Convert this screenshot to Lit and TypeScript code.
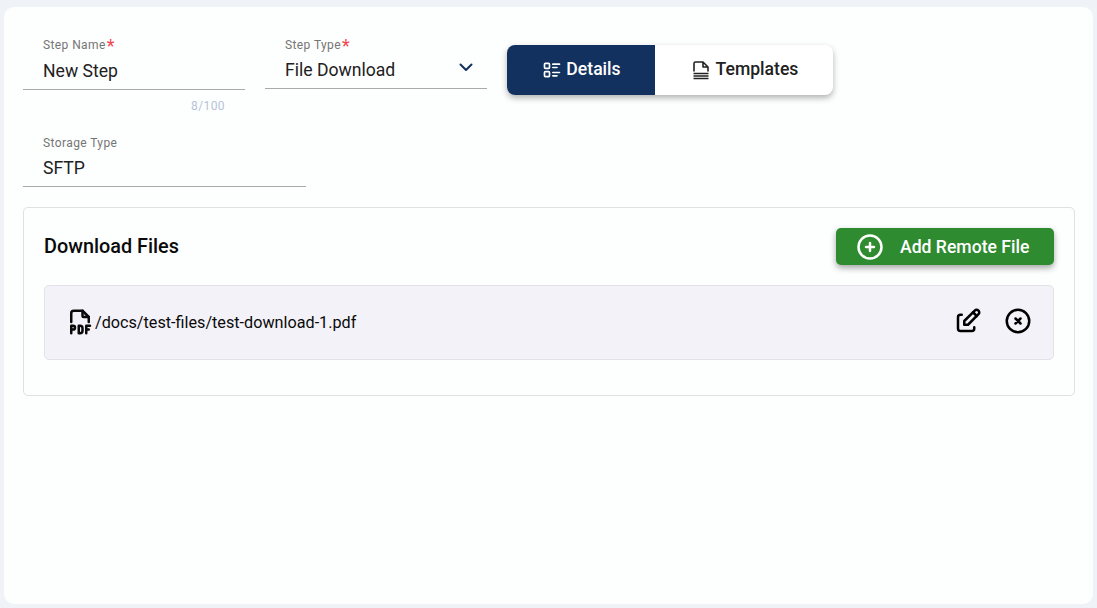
import { LitElement, html, css } from "lit";
import { customElement } from "lit/decorators.js";

@customElement("app-root")
export class AppRoot extends LitElement {
  static styles = css`
    :host { display: block; width: 1097px; height: 608px; background: #eff3f8; font-family: Roboto, "Liberation Sans", sans-serif; padding: 7px 4px 4px; box-sizing: border-box; overflow: hidden; }
    .card { height: 597px; background: #fdfefe; border-radius: 10px; padding: 0 18px 0 19px; box-sizing: border-box; display: flow-root; }
    .top { display: flex; gap: 20px; margin-top: 31px; height: 76px; align-items: flex-start; }
    .field { width: 222px; position: relative; }
    .label { font-size: 12px; line-height: 14px; color: #757575; padding-left: 20px; letter-spacing: .4px; display: flex; height: 14px; }
    .req { color: #f4454f; font-size: 18px; line-height: 16px; margin-left: 1px; letter-spacing: 0; }
    .value { font-size: 17.6px; line-height: 24px; color: #212121; padding-left: 20px; border-bottom: 1px solid #a9a9a9; }
    .v1 { padding-top: 7px; height: 30px; }
    .v2 { height: 30px; padding-top: 6px; display: flex; justify-content: space-between; }
    .chev { margin: -3px 9px 0 0; color: #12305f; }
    .count { font-size: 12px; line-height: 14px; color: #b7c3d6; text-align: right; padding: 9px 20px 0 0; letter-spacing: .4px; }
    .toggle { display: flex; width: 326px; height: 50px; margin-top: 7px; border-radius: 8px; overflow: hidden; box-shadow: 0 3px 6px rgba(0,0,0,.3); background: #fff; }
    .tab { display: flex; align-items: center; justify-content: center; gap: 6px; font-size: 17.6px; font-weight: 500; color: #212121; flex: 0 0 178px; padding: 0 0 3px 2px; box-sizing: border-box; }
    .tab.on { flex: 0 0 148px; background: #13315f; color: #fff; gap: 4px; padding-left: 1px; }
    .tab svg { flex: none; margin-top: 3px; }
    .storage { margin-top: 22px; width: 283px; }
    .storage .value { height: 30px; padding-top: 6px; }
    .panel { margin-top: 20px; height: 189px; border: 1px solid #dfe0e3; border-radius: 5px; box-sizing: border-box; padding: 20px 20px 0; }
    .head { display: flex; justify-content: space-between; align-items: center; height: 37px; }
    h2 { margin: 0; font-size: 19.84px; font-weight: 500; color: #0a0a0a; }
    button { width: 218px; height: 37px; border: 0; border-radius: 5px; background: #2e8b30; color: #fff; font: 500 17.6px Roboto, "Liberation Sans", sans-serif; display: flex; align-items: center; gap: 17px; padding: 0 0 0 21px; box-shadow: 0 3px 6px rgba(0,0,0,.35); }
    .row { margin-top: 20px; height: 75px; box-sizing: border-box; background: #f3f2f9; border: 1px solid #e2e2e8; border-radius: 5px; display: flex; align-items: center; padding: 0 20px 0 20px; }
    .file { display: flex; align-items: center; gap: 0; font-size: 16.2px; color: #0a0a0a; }
    .pdf { margin-top: -1px; }
    .actions { margin-left: auto; display: flex; gap: 20px; align-items: center; color: #000; margin-top: -3px; }
    svg { display: block; fill: none; stroke: currentColor; stroke-linecap: round; stroke-linejoin: round; }
  `;

  render() {
    return html`<div class="card">
      <div class="top">
        <div class="field">
          <div class="label">Step Name<span class="req">*</span></div>
          <div class="value v1">New Step</div>
          <div class="count">8/100</div>
        </div>
        <div class="field">
          <div class="label">Step Type<span class="req">*</span></div>
          <div class="value v2">File Download
            <svg class="chev" width="24" height="24" viewBox="0 0 24 24" stroke-width="2"><path d="M6.5 9.5l5.5 5.5l5.5 -5.5"/></svg>
          </div>
        </div>
        <div class="toggle">
          <div class="tab on">
            <svg width="20" height="20" viewBox="0 0 24 24" stroke-width="2"><path d="M13 5h8M13 9h5M13 15h8M13 19h5"/><rect x="3" y="4" width="6" height="6" rx="1"/><rect x="3" y="14" width="6" height="6" rx="1"/></svg>
            Details
          </div>
          <div class="tab">
            <svg width="18" height="20" viewBox="0 0 18 20" stroke-width="1.6"><path d="M2 11V3.5a1.5 1.5 0 0 1 1.5 -1.5H11l5 5v4M11 2v5h5"/><path d="M1.5 13.5h15M1.5 16h15M1.5 18.5h15" stroke-linecap="butt"/></svg>
            Templates
          </div>
        </div>
      </div>
      <div class="field storage">
        <div class="label">Storage Type</div>
        <div class="value">SFTP</div>
      </div>
      <div class="panel">
        <div class="head">
          <h2>Download Files</h2>
          <button>
            <svg width="26" height="26" viewBox="0 0 26 26" stroke-width="2.5"><circle cx="13" cy="13" r="11.5"/><path d="M9 13h8M13 9v8"/></svg>
            Add Remote File
          </button>
        </div>
        <div class="row">
          <div class="file">
            <svg class="pdf" width="30" height="30" viewBox="0 0 24 24" stroke-width="2"><path d="M14 3v4a1 1 0 0 0 1 1h4"/><path d="M5 12v-7a2 2 0 0 1 2 -2h7l5 5v4"/><path d="M5 18h1.5a1.5 1.5 0 0 0 0 -3h-1.5v6"/><path d="M17 18h2"/><path d="M20 15h-3v6"/><path d="M11 15v6h1a2 2 0 0 0 2 -2v-2a2 2 0 0 0 -2 -2h-1z"/></svg>
            /docs/test-files/test-download-1.pdf
          </div>
          <div class="actions">
            <svg width="30" height="30" viewBox="0 0 24 24" stroke-width="2"><path d="M7 7h-1a2 2 0 0 0 -2 2v9a2 2 0 0 0 2 2h9a2 2 0 0 0 2 -2v-1"/><path d="M20.385 6.585a2.1 2.1 0 0 0 -2.97 -2.97l-8.415 8.385v3h3l8.385 -8.415z"/><path d="M16 5l3 3"/></svg>
            <svg width="30" height="30" viewBox="0 0 24 24" stroke-width="2"><circle cx="12" cy="12" r="9"/><path d="M10 10l4 4M14 10l-4 4"/></svg>
          </div>
        </div>
      </div>
    </div>`;
  }
}
